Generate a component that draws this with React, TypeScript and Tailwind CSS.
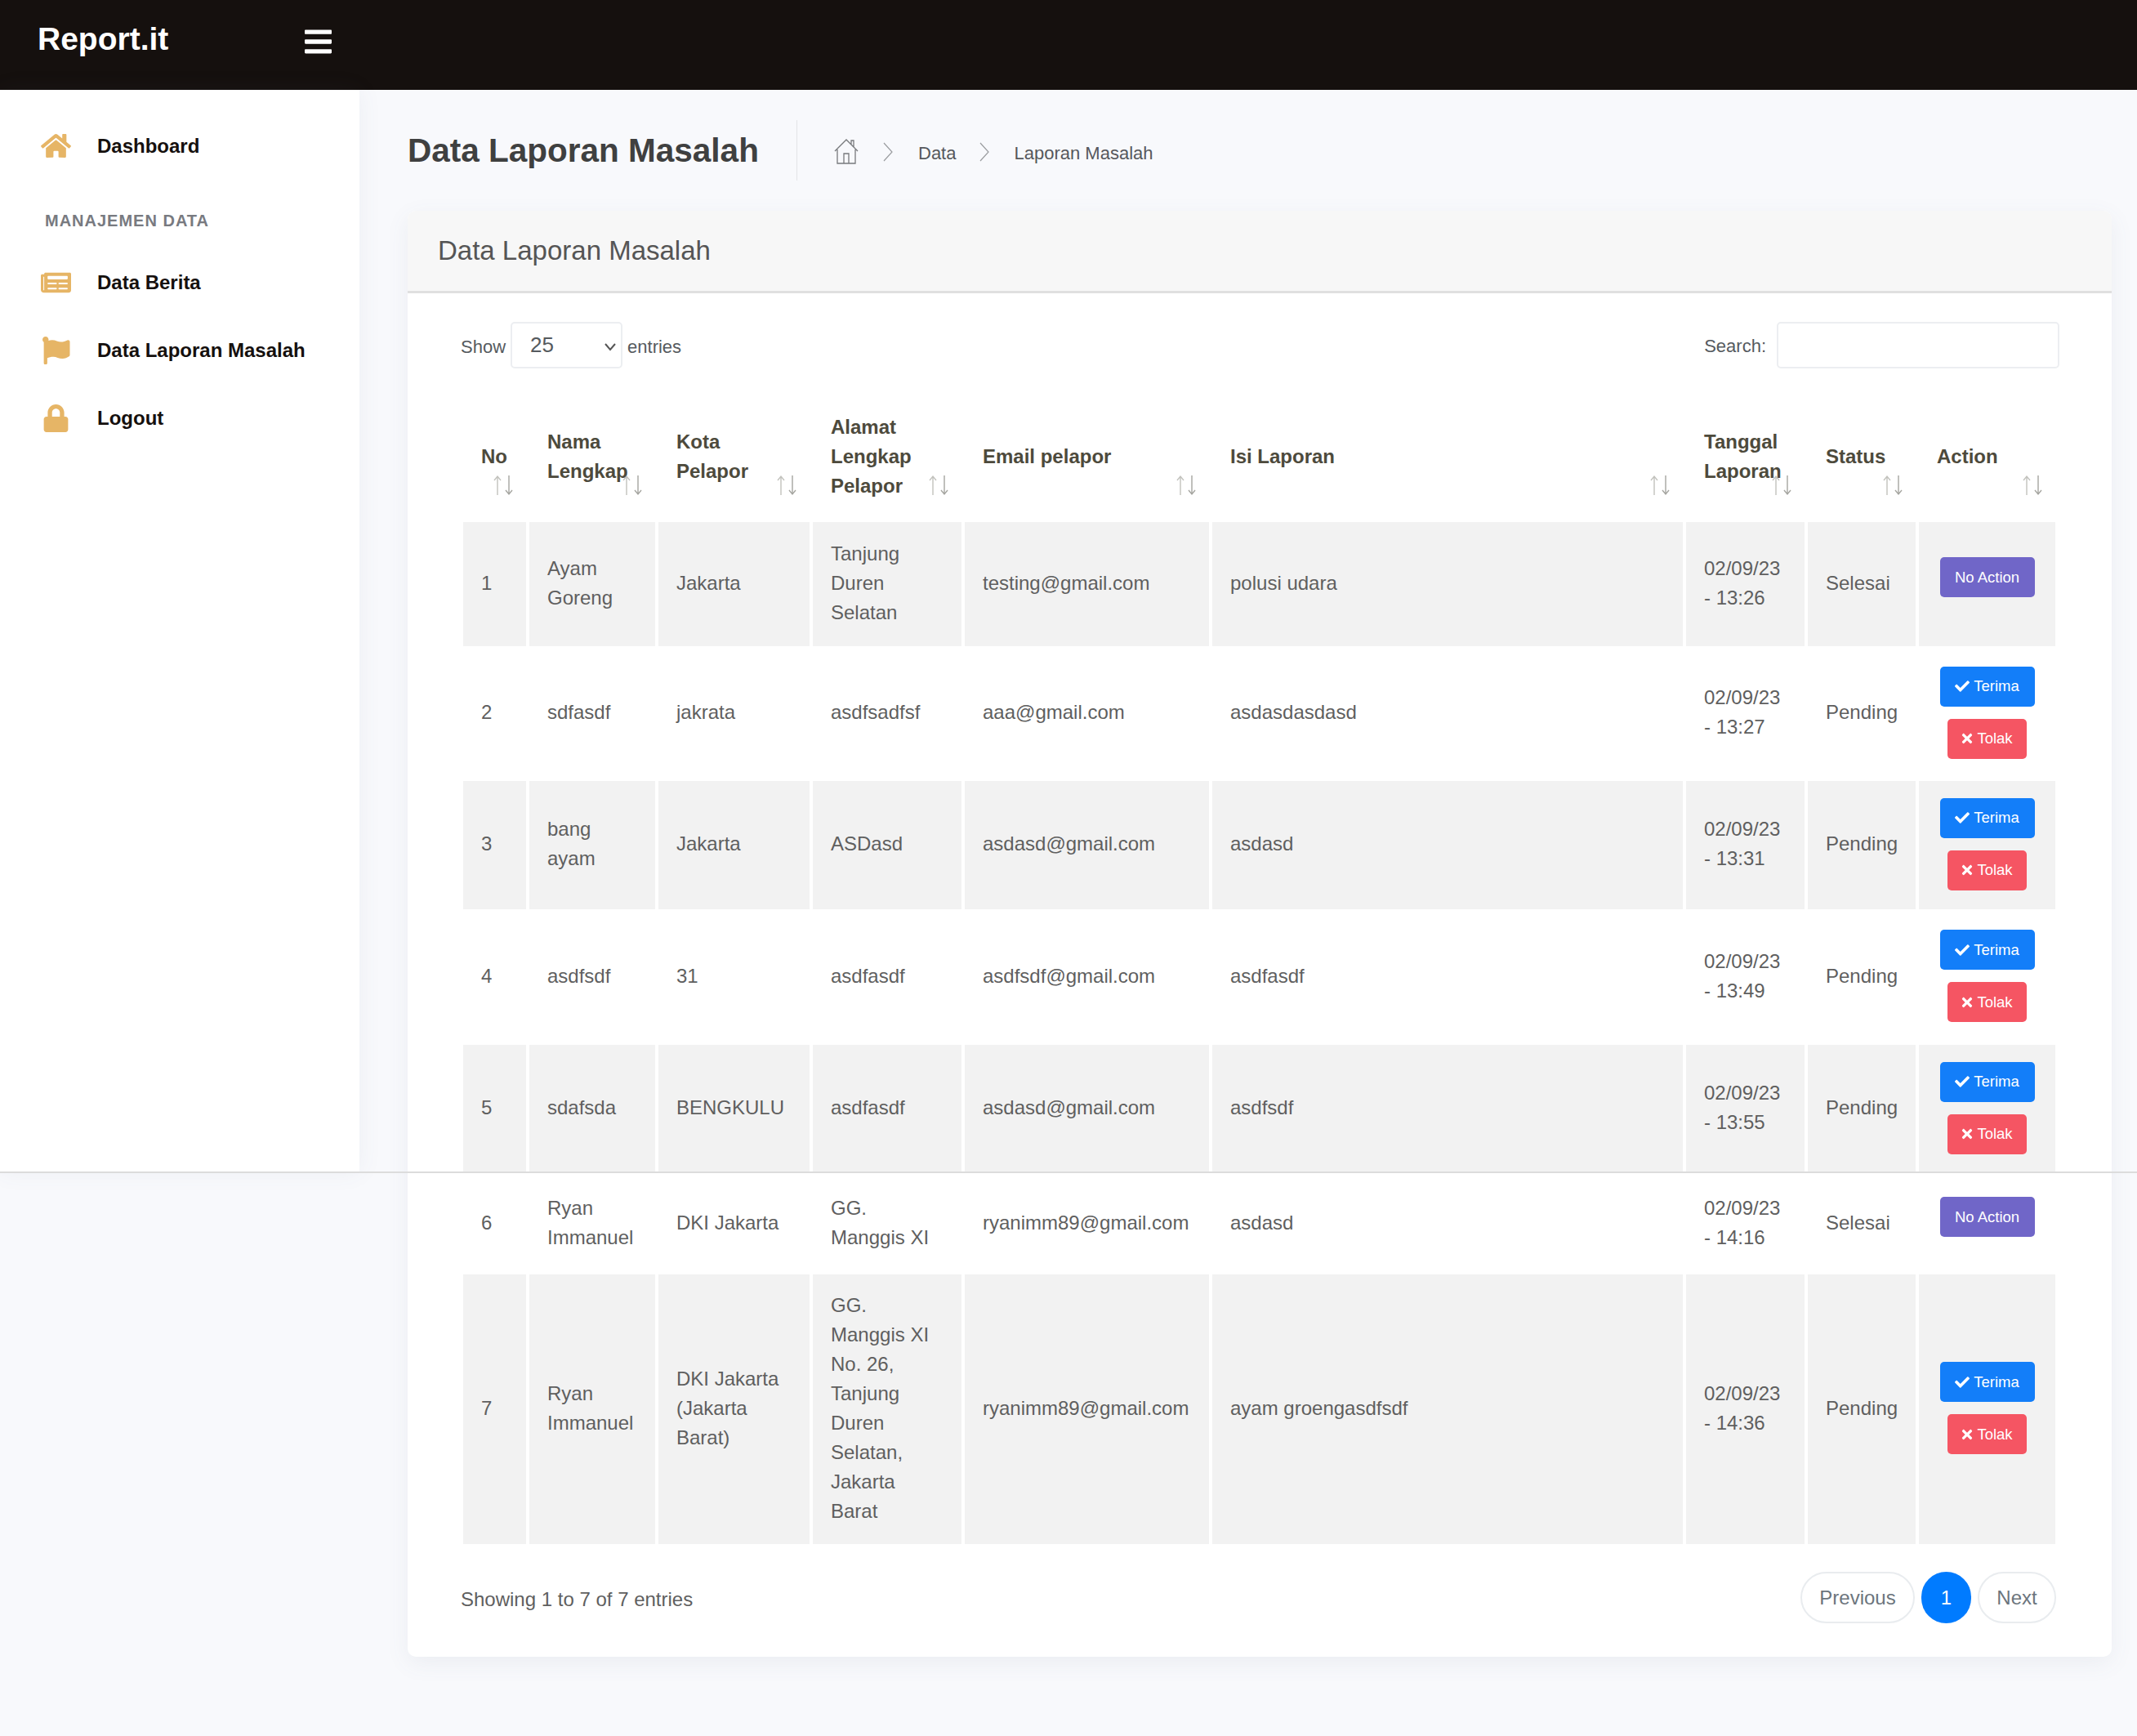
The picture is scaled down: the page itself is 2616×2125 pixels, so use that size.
import { FaBars, FaCheck, FaFlag, FaHome, FaLock, FaNewspaper, FaTimes } from "react-icons/fa";

const menu = [
  { label: "Data Berita", icon: FaNewspaper },
  { label: "Data Laporan Masalah", icon: FaFlag },
  { label: "Logout", icon: FaLock },
];

const columns = [
  { label: "No", width: "w-[77px]" },
  { label: "Nama Lengkap", width: "w-[154px]" },
  { label: "Kota Pelapor", width: "w-[185px]" },
  { label: "Alamat Lengkap Pelapor", width: "w-[182px]" },
  { label: "Email pelapor", width: "w-[299px]" },
  { label: "Isi Laporan", width: "w-[576px]" },
  { label: "Tanggal Laporan", width: "w-[145px]" },
  { label: "Status", width: "w-[132px]" },
  { label: "Action", width: "w-[167px]" },
];

const rows = [
  { no: 1, nama: "Ayam Goreng", kota: "Jakarta", alamat: "Tanjung Duren Selatan", email: "testing@gmail.com", isi: "polusi udara", tanggal: "02/09/23 - 13:26", status: "Selesai", height: "h-[152px]" },
  { no: 2, nama: "sdfasdf", kota: "jakrata", alamat: "asdfsadfsf", email: "aaa@gmail.com", isi: "asdasdasdasd", tanggal: "02/09/23 - 13:27", status: "Pending", height: "h-[165px]" },
  { no: 3, nama: "bang ayam", kota: "Jakarta", alamat: "ASDasd", email: "asdasd@gmail.com", isi: "asdasd", tanggal: "02/09/23 - 13:31", status: "Pending", height: "h-[157px]" },
  { no: 4, nama: "asdfsdf", kota: "31", alamat: "asdfasdf", email: "asdfsdf@gmail.com", isi: "asdfasdf", tanggal: "02/09/23 - 13:49", status: "Pending", height: "h-[166px]" },
  { no: 5, nama: "sdafsda", kota: "BENGKULU", alamat: "asdfasdf", email: "asdasd@gmail.com", isi: "asdfsdf", tanggal: "02/09/23 - 13:55", status: "Pending", height: "h-[157px]" },
  { no: 6, nama: "Ryan Immanuel", kota: "DKI Jakarta", alamat: "GG. Manggis XI", email: "ryanimm89@gmail.com", isi: "asdasd", tanggal: "02/09/23 - 14:16", status: "Selesai", height: "h-[124px]" },
  { no: 7, nama: "Ryan Immanuel", kota: "DKI Jakarta (Jakarta Barat)", alamat: "GG. Manggis XI No. 26, Tanjung Duren Selatan, Jakarta Barat", email: "ryanimm89@gmail.com", isi: "ayam groengasdfsdf", tanggal: "02/09/23 - 14:36", status: "Pending", height: "h-[330px]" },
];

function SortArrows() {
  return (
    <svg className="absolute bottom-[32px] right-[15px] h-[26px] w-[26px]" viewBox="0 0 26 26" fill="none">
      <path d="M6 25V2M2 7l4-5 4 5" stroke="#c2c2bd" strokeWidth="1.4" />
      <path d="M20 1v23M16 19l4 5 4-5" stroke="#a5a5a0" strokeWidth="1.4" />
    </svg>
  );
}

function ActionButtons({ status }: { status: string }) {
  if (status === "Selesai") {
    return (
      <div className="mb-[14px] flex justify-center">
        <button className="h-[49px] w-[116px] rounded-[5px] bg-[#7066c8] text-[18.5px] text-white">No Action</button>
      </div>
    );
  }
  return (
    <div className="flex flex-col items-center gap-[15px]">
      <button className="flex h-[49px] w-[116px] items-center justify-center gap-[5px] rounded-[5px] bg-[#137ef9] text-[18.5px] text-white">
        <FaCheck className="h-[18px] w-[18px]" />
        Terima
      </button>
      <button className="flex h-[49px] w-[97px] items-center justify-center gap-[5px] rounded-[5px] bg-[#f55563] text-[18.5px] text-white">
        <FaTimes className="h-[18px] w-[14px]" />
        Tolak
      </button>
    </div>
  );
}

export default function App() {
  return (
    <div className="relative flex h-[2125px] w-[2616px] flex-col overflow-hidden bg-[#f8f9fc] font-['Liberation_Sans',sans-serif]">
      <header className="flex h-[110px] shrink-0 items-center bg-[#15100e] pl-[46px]">
        <span className="mb-[14px] w-[327px] text-[39px] font-bold text-white">Report.it</span>
        <FaBars className="mb-[9px] h-[38px] w-[33px] text-white" />
      </header>

      <div className="flex flex-1">
        <aside className="h-[1324px] w-[440px] shrink-0 bg-white shadow-[0_0_28px_rgba(90,100,130,0.07)]">
          <a className="mt-[27px] flex h-[83px] items-center pl-[50px]">
            <FaHome className="mr-[32px] h-[37px] w-[37px] text-[#e6b566]" />
            <span className="text-[24px] font-bold text-[#15100e]">Dashboard</span>
          </a>
          <div className="flex h-[84px] items-center pl-[55px] pt-[15px] text-[20px] font-bold tracking-[1px] text-[#787a80]">
            MANAJEMEN DATA
          </div>
          {menu.map((item) => (
            <a key={item.label} className="flex h-[83px] items-center pl-[50px]">
              <span className="mr-[32px] flex w-[37px] justify-center">
                <item.icon className="h-[34px] w-[37px] text-[#e6b566]" />
              </span>
              <span className="text-[24px] font-bold text-[#15100e]">{item.label}</span>
            </a>
          ))}
        </aside>

        <main className="min-w-0 flex-1 pl-[59px] pr-[31px]">
          <div className="flex h-[148px] items-center">
            <h1 className="w-[476px] text-[40.5px] font-bold text-[#3f4040]">Data Laporan Masalah</h1>
            <div className="flex h-[74px] items-center border-l border-[#e4e5e8] pl-[45px] text-[22px] text-[#56585c]">
              <svg className="mr-[30px] mt-[2px] h-[32px] w-[30px]" viewBox="0 0 30 32" fill="none" stroke="#77797c" strokeWidth="1.3">
                <path d="M1 16 15 2l14 14M4 14v17h22V14M12 31V19h6v12M21 8V3h3v8" />
              </svg>
              <svg className="mr-[31px] mt-[4px] h-[24px] w-[12px]" viewBox="0 0 12 24" fill="none" stroke="#9a9c9f" strokeWidth="1.2">
                <path d="m1 1 10 11L1 23" />
              </svg>
              <span className="mr-[29px] pt-[6px]">Data</span>
              <svg className="mr-[30px] mt-[4px] h-[24px] w-[12px]" viewBox="0 0 12 24" fill="none" stroke="#9a9c9f" strokeWidth="1.2">
                <path d="m1 1 10 11L1 23" />
              </svg>
              <span className="pt-[6px]">Laporan Masalah</span>
            </div>
          </div>

          <section className="h-[1770px] rounded-[10px] bg-white shadow-[0_8px_28px_rgba(90,100,130,0.08)]">
            <div className="flex h-[101px] items-center rounded-t-[10px] border-b-[3px] border-[#e0e0e0] bg-[#f7f7f7] pl-[37px] text-[33px] text-[#555555]">
              Data Laporan Masalah
            </div>

            <div className="px-[64px]">
              <div className="flex h-[119px] items-center justify-between pl-px pt-[8px] text-[22px] text-[#555a5e]">
                <div className="flex items-center">
                  <span className="pt-[3px]">Show</span>
                  <div className="relative mx-[6px] flex h-[57px] w-[137px] items-center rounded-[5px] border-2 border-[#eceef1] pl-[22px] text-[26px]">
                    25
                    <svg className="absolute right-[5px] top-[24px] h-[10px] w-[16px]" viewBox="0 0 16 10" fill="none" stroke="#555" strokeWidth="2">
                      <path d="m2 1 6 7 6-7" />
                    </svg>
                  </div>
                  <span className="pt-[3px]">entries</span>
                </div>
                <div className="flex items-center">
                  <span className="pt-[2px]">Search:</span>
                  <input className="ml-[13px] h-[57px] w-[346px] rounded-[5px] border-2 border-[#eceef1]" />
                </div>
              </div>

              <table className="w-[1957px] table-fixed border-separate border-spacing-x-[4px] border-spacing-y-0 text-[24px] leading-[36px] text-[#5f5f5f]">
                <colgroup>
                  {columns.map((col) => (
                    <col key={col.label} className={col.width} />
                  ))}
                </colgroup>
                <thead>
                  <tr className="h-[161px]">
                    {columns.map((col) => (
                      <th key={col.label} className="relative pl-[22px] pr-[45px] text-left font-bold text-[#4d4a3c]">
                        {col.label}
                        <SortArrows />
                      </th>
                    ))}
                  </tr>
                </thead>
                <tbody>
                  {rows.map((row) => (
                    <tr key={row.no} className={`${row.height} ${row.no % 2 === 1 ? "bg-[#f2f2f2]" : "bg-white"}`}>
                      <td className="px-[22px] pb-[3px]">{row.no}</td>
                      <td className="px-[22px] pb-[3px]">{row.nama}</td>
                      <td className="px-[22px] pb-[3px]">{row.kota}</td>
                      <td className="px-[22px] pb-[3px]">{row.alamat}</td>
                      <td className="px-[22px] pb-[3px]">{row.email}</td>
                      <td className="px-[22px] pb-[3px]">{row.isi}</td>
                      <td className="px-[22px] pb-[3px]">{row.tanggal}</td>
                      <td className="px-[22px] pb-[3px]">{row.status}</td>
                      <td className="pb-[3px]">
                        <ActionButtons status={row.status} />
                      </td>
                    </tr>
                  ))}
                </tbody>
              </table>

              <div className="mt-[37px] flex items-center justify-between pr-[4px] text-[24px]">
                <span className="pl-px pt-[2px] text-[#5f5f5f]">Showing 1 to 7 of 7 entries</span>
                <div className="-mt-[3px] flex items-center gap-[8px] text-[#6c757d]">
                  <a className="flex h-[63px] w-[140px] items-center justify-center rounded-full border-2 border-[#e9ecef]">Previous</a>
                  <a className="flex h-[63px] w-[61px] items-center justify-center rounded-full bg-[#007bff] text-white">1</a>
                  <a className="flex h-[63px] w-[96px] items-center justify-center rounded-full border-2 border-[#e9ecef]">Next</a>
                </div>
              </div>
            </div>
          </section>
        </main>
      </div>

      {/* seam of the stitched full page capture */}
      <div className="absolute inset-x-0 top-[1434px] h-[2px] bg-[#dcdcdc]" />
    </div>
  );
}
